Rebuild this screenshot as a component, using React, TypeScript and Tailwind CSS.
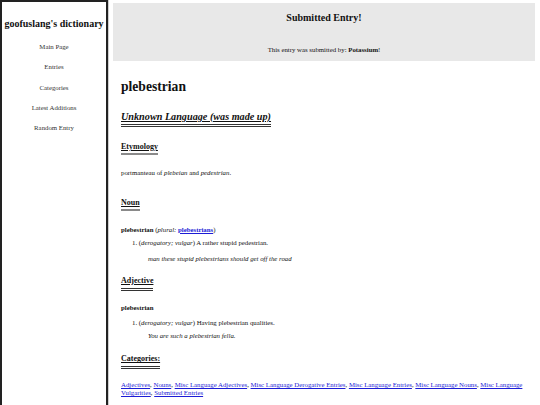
const serif = { fontFamily: '"Liberation Serif", "Times New Roman", serif' };

const navItems = ["Main Page", "Entries", "Categories", "Latest Additions", "Random Entry"];

const categories = [
  "Adjectives",
  "Nouns",
  "Misc Language Adjectives",
  "Misc Language Derogative Entries",
  "Misc Language Entries",
  "Misc Language Nouns",
  "Misc Language Vulgarities",
  "Submitted Entries",
];

function SectionHeading({ children, soft }: { children: React.ReactNode; soft?: boolean }) {
  return (
    <div className="flex">
      <h3
        className={
          soft
            ? "text-[8px] font-bold leading-[10px] underline border-b-2 border-solid border-[#8a8a8a] pb-[1px]"
            : "text-[8px] font-bold leading-[10px] underline border-b-[3px] border-double border-[#333] pb-[2px]"
        }
      >
        {children}
      </h3>
    </div>
  );
}

export default function App() {
  return (
    <div className="flex w-[540px] h-[405px] overflow-hidden bg-white text-[#111]" style={serif}>
      {/* sidebar */}
      <aside className="w-[108px] shrink-0 border-t-2 border-l-2 border-r-2 border-[#222] shadow-[1px_0_0_#cfcfcf] flex flex-col items-center">
        <h1 className="mt-[15px] text-[10px] font-bold leading-[14px] whitespace-nowrap">
          goofuslang's dictionary
        </h1>
        <nav className="mt-[11px] flex flex-col items-center gap-[10.3px]">
          {navItems.map((item) => (
            <a key={item} className="text-[6.8px] leading-[10px] text-[#333]">
              {item}
            </a>
          ))}
        </nav>
      </aside>

      {/* main */}
      <main className="flex-1 pl-[5px] pr-[5px] pt-[3px]">
        <div className="bg-[#e8e8e8] h-[58px] flex flex-col items-center">
          <h2 className="mt-[9px] text-[10px] font-bold leading-[12px]">Submitted Entry!</h2>
          <p className="mt-[20.5px] text-[6.8px] leading-[9px]">
            This entry was submitted by: <b>Potassium</b>!
          </p>
        </div>

        <div className="pl-[8px]">
          <h1 className="mt-[18px] text-[13.6px] font-bold leading-[16px]">plebestrian</h1>

          <div className="flex mt-[16px]">
            <h2 className="text-[10.2px] font-bold italic leading-[12px] underline border-b-[3px] border-double border-[#333] pb-[1px]">
              Unknown Language (was made up)
            </h2>
          </div>

          <div className="mt-[15px]">
            <SectionHeading soft>Etymology</SectionHeading>
          </div>
          <p className="mt-[12.5px] text-[6.8px] leading-[9px]">
            portmanteau of <i>plebeian</i> and <i>pedestrian</i>.
          </p>

          <div className="mt-[21.5px]">
            <SectionHeading soft>Noun</SectionHeading>
          </div>
          <p className="mt-[13.5px] text-[6.8px] leading-[9px]">
            <b>plebestrian</b> (<i>plural:</i>{" "}
            <a className="font-bold text-[#1c1cd6] underline">plebestrians</a>)
          </p>
          <ol className="mt-[4px] text-[6.8px] leading-[9px] pl-[11px]">
            <li>
              1. (<i>derogatory; vulgar</i>) A rather stupid pedestrian.
              <p className="mt-[7px] pl-[16px] italic">man these stupid plebestrians should get off the road</p>
            </li>
          </ol>

          <div className="mt-[13.5px]">
            <SectionHeading>Adjective</SectionHeading>
          </div>
          <p className="mt-[11.8px] text-[6.8px] leading-[9px] font-bold">plebestrian</p>
          <ol className="mt-[6px] text-[6.8px] leading-[9px] pl-[11px]">
            <li>
              1. (<i>derogatory; vulgar</i>) Having plebestrian qualities.
              <p className="mt-[4.7px] pl-[16px] italic">You are such a plebestrian fella.</p>
            </li>
          </ol>

          <div className="mt-[13.8px]">
            <SectionHeading>Categories:</SectionHeading>
          </div>
          <p className="mt-[12px] text-[6.8px] leading-[8px]">
            {categories.map((c, i) => (
              <span key={c}>
                <a className="text-[#1c1cd6] underline">{c}</a>
                {i < categories.length - 1 ? ", " : ""}
              </span>
            ))}
          </p>
        </div>
      </main>
    </div>
  );
}
